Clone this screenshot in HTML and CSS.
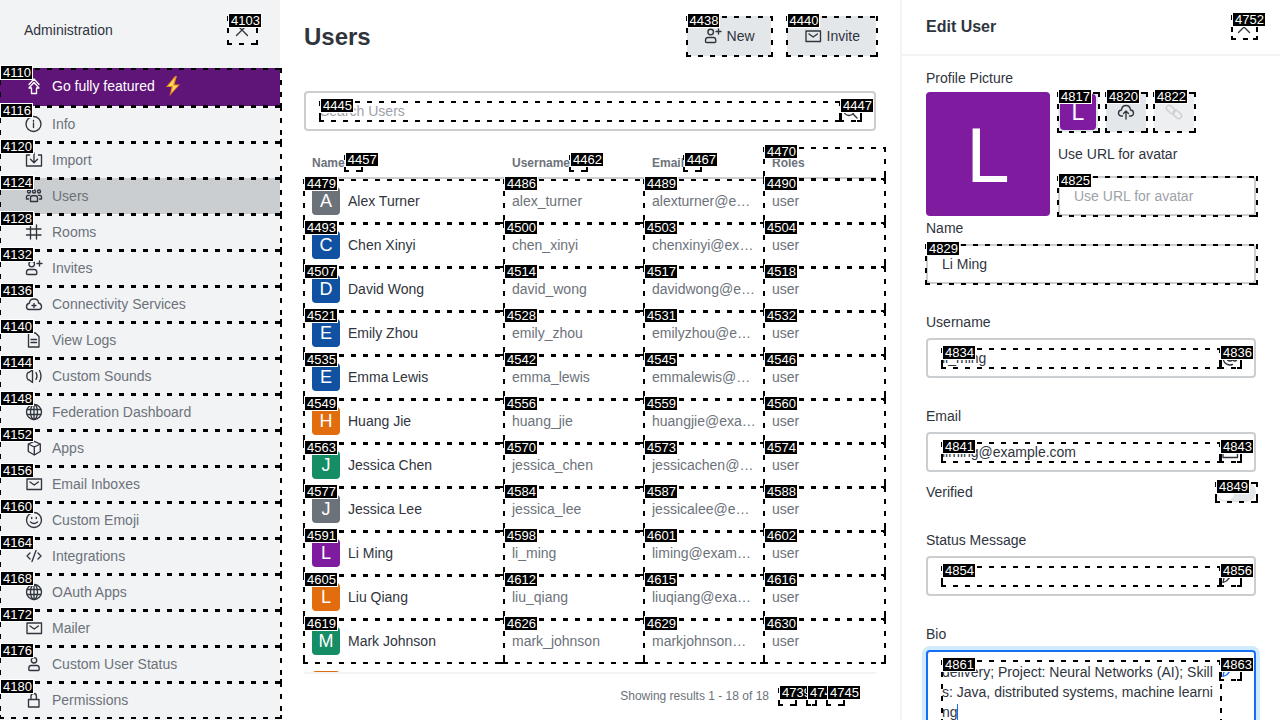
FILE: index.html
```html
<!DOCTYPE html>
<html lang="en">
<head>
<meta charset="utf-8">
<title>Administration - Users</title>
<link rel="stylesheet" href="styles.css">
</head>
<body>
<svg class="sprite" aria-hidden="true">
  <symbol id="close" viewBox="0 0 20 20"><path d="M4.500 4.500l11 11M15.500 4.500l-11 11"/></symbol>
  <symbol id="up" viewBox="0 0 20 20"><path d="M5 8.500L10 3l5 5.500M7.500 17.500h5V12h2.500L10 6.500 5 12h2.500z"/></symbol>
  <symbol id="info" viewBox="0 0 20 20"><circle cx="9.500" cy="10" r="7.500"/><path d="M9.500 9v4.500M9.500 6.300v1"/></symbol>
  <symbol id="import" viewBox="0 0 20 20"><path d="M5.500 5h-3v11h15V5h-3M10 3v9.500M6.500 9.300l3.500 3.400 3.500-3.400"/></symbol>
  <symbol id="team" viewBox="0 0 20 20"><circle cx="5" cy="5.500" r="1.500"/><circle cx="10" cy="5.500" r="1.500"/><circle cx="15" cy="5.500" r="1.500"/><path d="M6.500 15.500v-3.500q0-2.300 2-2.300h3q2 0 2 2.300v3.500zM5.500 9.300H4q-1.500 0-1.500 2v1.700h2M14.500 9.300h1.500q1.500 0 1.500 2v1.700h-2"/></symbol>
  <symbol id="hash" viewBox="0 0 20 20"><path d="M6.500 3v14M12.500 3v14M2.500 7h14.500M2.500 13h14.500"/></symbol>
  <symbol id="useradd" viewBox="0 0 20 20"><circle cx="7.700" cy="6" r="2.800"/><path d="M2.500 14.500q0-3 2.500-3h5.500q2.300 0 2.300 3v1q0 1-1 1H3.500q-1 0-1-1zM15.500 3v5M13 5.500h5"/></symbol>
  <symbol id="cloud" viewBox="0 0 20 20"><path d="M5 15.500q-2.500 0-2.500-2.800T5.500 9q0-4 4.500-4t4.500 4q3 .7 3 3.600t-2.500 2.900zM10 9.500v4M8 11.500h4"/></symbol>
  <symbol id="upload" viewBox="0 0 20 20"><path d="M6.500 14H5q-2.500-.3-2.500-3t3-3q.5-4.500 4.500-4.500T14.500 8q3 .3 3 3T15 14h-1.500M10 17V9M7.500 11.500L10 9l2.500 2.500"/></symbol>
  <symbol id="file" viewBox="0 0 20 20"><path d="M4.500 3h7l3.500 3.500V17H4.500zM7 9.500h5.500M7 12.500h5.500"/></symbol>
  <symbol id="sound" viewBox="0 0 20 20"><path d="M5 6.500l3.500-2.800v12.800L5 13.700H4q-1.200-1-1.200-3.600T4 6.500zM12 6.500q2 3.500 0 7M15.500 4.500q3 5.500 0 11"/></symbol>
  <symbol id="globe" viewBox="0 0 20 20"><circle cx="10" cy="10" r="7.500"/><ellipse cx="10" cy="10" rx="3.500" ry="7.500"/><path d="M10 2.500v15M3.300 7.500h13.400M3.300 12.500h13.400"/></symbol>
  <symbol id="cube" viewBox="0 0 20 20"><path d="M10.300 3.300l6 2.700v7.500l-6 3.500-6-3.500V6zM4.300 6l6 3 6-3M10.300 9v8"/></symbol>
  <symbol id="mail" viewBox="0 0 20 20"><path d="M3 5h14.500v10.500H3zM6 8l4.200 3 4.200-3"/></symbol>
  <symbol id="emoji" viewBox="0 0 20 20"><circle cx="10" cy="10" r="7.500"/><path d="M6.500 12q3.500 3 7 0M7.700 7.300v1.200M12.300 7.300v1.200" /></symbol>
  <symbol id="code" viewBox="0 0 20 20"><path d="M6 7l-3 3 3 3M14 7l3 3-3 3M12 4.500l-4 11"/></symbol>
  <symbol id="user" viewBox="0 0 20 20"><circle cx="10" cy="6.300" r="2.700"/><path d="M4.800 14.500q0-3 2.200-3h6q2.200 0 2.200 3v1q0 1-1 1H5.800q-1 0-1-1z"/></symbol>
  <symbol id="lock" viewBox="0 0 20 20"><path d="M4.500 9.500h10.500V17H4.500zM7 9.500V6.200q0-2.700 2.700-2.700t2.700 2.700v3.300"/></symbol>
  <symbol id="search" viewBox="0 0 20 20"><circle cx="9" cy="9" r="5.500"/><path d="M13 13l4 4"/></symbol>
  <symbol id="at" viewBox="0 0 20 20"><circle cx="10" cy="10" r="3"/><path d="M13 7v4.500q0 1.500 2 1.500t2-3a7 7 0 1 0-4.500 6.500"/></symbol>
  <symbol id="edit" viewBox="0 0 20 20"><path d="M3 16.500l1-5L11.500 4 14 6.500 6.500 15z"/></symbol>
  <symbol id="link" viewBox="0 0 20 20"><rect x="2" y="5" width="9.500" height="5.500" rx="2.700" transform="rotate(42 7 7.500)"/><rect x="8.500" y="9.500" width="9.500" height="5.500" rx="2.700" transform="rotate(42 13 12.500)"/></symbol>
  <symbol id="sort" viewBox="0 0 16 16"><path d="M5 6l3-3 3 3M6 10l2 2 2-2"/></symbol>
</svg>

<div class="app">
<nav class="sidebar">
  <header class="sidebar-head"><span>Administration</span><button class="close-lg" aria-label="Close"><svg class="icon"><use href="#close"/></svg><span class="mark"><b>4103</b></span></button></header>
  <a class="item promo" href="#"><svg class="icon"><use href="#up"/></svg>Go fully featured<svg class="bolt" viewBox="0 0 16 20"><path d="M10 0L1 11h5.500L4.500 20 15 8.500H9.500L12 0z" fill="#e88a1c"/><path d="M10 1.500L3 10h5L6.500 16.500 13 9.500H8z" fill="#ffd95c"/></svg><span class="mark"><b>4110</b></span></a>
  <a class="item" href="#"><svg class="icon"><use href="#info"/></svg>Info<span class="mark"><b>4116</b></span></a>
  <a class="item" href="#"><svg class="icon"><use href="#import"/></svg>Import<span class="mark"><b>4120</b></span></a>
  <a class="item current" href="#"><svg class="icon"><use href="#team"/></svg>Users<span class="mark"><b>4124</b></span></a>
  <a class="item" href="#"><svg class="icon"><use href="#hash"/></svg>Rooms<span class="mark"><b>4128</b></span></a>
  <a class="item" href="#"><svg class="icon"><use href="#useradd"/></svg>Invites<span class="mark"><b>4132</b></span></a>
  <a class="item" href="#"><svg class="icon"><use href="#cloud"/></svg>Connectivity Services<span class="mark"><b>4136</b></span></a>
  <a class="item" href="#"><svg class="icon"><use href="#file"/></svg>View Logs<span class="mark"><b>4140</b></span></a>
  <a class="item" href="#"><svg class="icon"><use href="#sound"/></svg>Custom Sounds<span class="mark"><b>4144</b></span></a>
  <a class="item" href="#"><svg class="icon"><use href="#globe"/></svg>Federation Dashboard<span class="mark"><b>4148</b></span></a>
  <a class="item" href="#"><svg class="icon"><use href="#cube"/></svg>Apps<span class="mark"><b>4152</b></span></a>
  <a class="item" href="#"><svg class="icon"><use href="#mail"/></svg>Email Inboxes<span class="mark"><b>4156</b></span></a>
  <a class="item" href="#"><svg class="icon"><use href="#emoji"/></svg>Custom Emoji<span class="mark"><b>4160</b></span></a>
  <a class="item" href="#"><svg class="icon"><use href="#code"/></svg>Integrations<span class="mark"><b>4164</b></span></a>
  <a class="item" href="#"><svg class="icon"><use href="#globe"/></svg>OAuth Apps<span class="mark"><b>4168</b></span></a>
  <a class="item" href="#"><svg class="icon"><use href="#mail"/></svg>Mailer<span class="mark"><b>4172</b></span></a>
  <a class="item" href="#"><svg class="icon"><use href="#user"/></svg>Custom User Status<span class="mark"><b>4176</b></span></a>
  <a class="item" href="#"><svg class="icon"><use href="#lock"/></svg>Permissions<span class="mark"><b>4180</b></span></a>
</nav>

<main class="main">
  <header class="main-head">
    <h1>Users</h1>
    <button class="btn"><svg class="icon"><use href="#useradd"/></svg>New<span class="mark"><b>4438</b></span></button>
    <button class="btn"><svg class="icon"><use href="#mail"/></svg>Invite<span class="mark"><b>4440</b></span></button>
  </header>
  <div class="box search">
    <span class="slot"><input type="text" placeholder="Search Users" aria-label="Search Users"><span class="mark"><b>4445</b></span></span>
    <span class="addon"><svg class="icon"><use href="#search"/></svg><span class="mark"><b>4447</b></span></span>
  </div>
  <div class="table-wrap">
  <table>
    <colgroup><col><col class="c-user"><col class="c-mail"><col class="c-role"></colgroup>
    <thead><tr>
      <th><div class="th">Name<span class="sort"><svg><use href="#sort"/></svg><span class="mark"><b>4457</b></span></span></div></th>
      <th><div class="th">Username<span class="sort"><svg><use href="#sort"/></svg><span class="mark"><b>4462</b></span></span></div></th>
      <th><div class="th">Email<span class="sort"><svg><use href="#sort"/></svg><span class="mark"><b>4467</b></span></span></div></th>
      <th><div class="th">Roles</div><span class="mark"><b>4470</b></span></th>
    </tr></thead>
    <tbody>
    <tr><td><div class="person"><i class="avatar gray">A</i>Alex Turner</div><span class="mark"><b>4479</b></span></td><td>alex_turner<span class="mark"><b>4486</b></span></td><td><div class="cut">alexturner@example.com</div><span class="mark"><b>4489</b></span></td><td>user<span class="mark"><b>4490</b></span></td></tr>
    <tr><td><div class="person"><i class="avatar blue">C</i>Chen Xinyi</div><span class="mark"><b>4493</b></span></td><td>chen_xinyi<span class="mark"><b>4500</b></span></td><td><div class="cut">chenxinyi@example.com</div><span class="mark"><b>4503</b></span></td><td>user<span class="mark"><b>4504</b></span></td></tr>
    <tr><td><div class="person"><i class="avatar blue">D</i>David Wong</div><span class="mark"><b>4507</b></span></td><td>david_wong<span class="mark"><b>4514</b></span></td><td><div class="cut">davidwong@example.com</div><span class="mark"><b>4517</b></span></td><td>user<span class="mark"><b>4518</b></span></td></tr>
    <tr><td><div class="person"><i class="avatar blue">E</i>Emily Zhou</div><span class="mark"><b>4521</b></span></td><td>emily_zhou<span class="mark"><b>4528</b></span></td><td><div class="cut">emilyzhou@example.com</div><span class="mark"><b>4531</b></span></td><td>user<span class="mark"><b>4532</b></span></td></tr>
    <tr><td><div class="person"><i class="avatar blue">E</i>Emma Lewis</div><span class="mark"><b>4535</b></span></td><td>emma_lewis<span class="mark"><b>4542</b></span></td><td><div class="cut">emmalewis@example.com</div><span class="mark"><b>4545</b></span></td><td>user<span class="mark"><b>4546</b></span></td></tr>
    <tr><td><div class="person"><i class="avatar orange">H</i>Huang Jie</div><span class="mark"><b>4549</b></span></td><td>huang_jie<span class="mark"><b>4556</b></span></td><td><div class="cut">huangjie@example.com</div><span class="mark"><b>4559</b></span></td><td>user<span class="mark"><b>4560</b></span></td></tr>
    <tr><td><div class="person"><i class="avatar green">J</i>Jessica Chen</div><span class="mark"><b>4563</b></span></td><td>jessica_chen<span class="mark"><b>4570</b></span></td><td><div class="cut">jessicachen@example.com</div><span class="mark"><b>4573</b></span></td><td>user<span class="mark"><b>4574</b></span></td></tr>
    <tr><td><div class="person"><i class="avatar gray">J</i>Jessica Lee</div><span class="mark"><b>4577</b></span></td><td>jessica_lee<span class="mark"><b>4584</b></span></td><td><div class="cut">jessicalee@example.com</div><span class="mark"><b>4587</b></span></td><td>user<span class="mark"><b>4588</b></span></td></tr>
    <tr><td><div class="person"><i class="avatar purple">L</i>Li Ming</div><span class="mark"><b>4591</b></span></td><td>li_ming<span class="mark"><b>4598</b></span></td><td><div class="cut">liming@example.com</div><span class="mark"><b>4601</b></span></td><td>user<span class="mark"><b>4602</b></span></td></tr>
    <tr><td><div class="person"><i class="avatar orange">L</i>Liu Qiang</div><span class="mark"><b>4605</b></span></td><td>liu_qiang<span class="mark"><b>4612</b></span></td><td><div class="cut">liuqiang@example.com</div><span class="mark"><b>4615</b></span></td><td>user<span class="mark"><b>4616</b></span></td></tr>
    <tr><td><div class="person"><i class="avatar green">M</i>Mark Johnson</div><span class="mark"><b>4619</b></span></td><td>mark_johnson<span class="mark"><b>4626</b></span></td><td><div class="cut">markjohnson@example.com</div><span class="mark"><b>4629</b></span></td><td>user<span class="mark"><b>4630</b></span></td></tr>
    <tr><td><div class="person"><i class="avatar orange"></i></div></td><td></td><td></td><td></td></tr>
    </tbody>
  </table>
  </div>
  <footer class="pager">
    <span>Showing results 1 - 18 of 18</span>
    <div class="pages">
      <button class="page" aria-label="Previous">‹<span class="mark"><b>4739</b></span></button>
      <button class="page num">1<span class="mark"><b>4742</b></span></button>
      <button class="page" aria-label="Next">›<span class="mark"><b>4745</b></span></button>
    </div>
  </footer>
</main>

<aside class="panel">
  <header class="panel-head"><h2>Edit User</h2><button class="close-sm" aria-label="Close"><svg class="icon"><use href="#close"/></svg><span class="mark"><b>4752</b></span></button></header>
  <form class="form">
    <div class="label">Profile Picture</div>
    <div class="picture">
      <div class="avatar-xl purple">L</div>
      <div class="picture-side">
        <div class="tools">
          <button type="button" class="tool" aria-label="Default avatar"><i class="avatar-sm purple">L</i><span class="mark"><b>4817</b></span></button>
          <button type="button" class="tool" aria-label="Upload"><svg class="icon"><use href="#upload"/></svg><span class="mark"><b>4820</b></span></button>
          <button type="button" class="tool off" aria-label="Add from URL"><svg class="icon"><use href="#link"/></svg><span class="mark"><b>4822</b></span></button>
        </div>
        <label class="label" for="url">Use URL for avatar</label>
        <div class="box"><input id="url" type="text" placeholder="Use URL for avatar"><span class="mark edge"><b>4825</b></span></div>
      </div>
    </div>
    <div class="field"><label class="label" for="name">Name</label>
      <div class="box"><input id="name" type="text" value="Li Ming"><span class="mark edge"><b>4829</b></span></div></div>
    <div class="field"><label class="label" for="username">Username</label>
      <div class="box"><span class="slot"><input id="username" type="text" value="li_ming"><span class="mark"><b>4834</b></span></span><span class="addon"><svg class="icon"><use href="#at"/></svg><span class="mark"><b>4836</b></span></span></div></div>
    <div class="field tight"><label class="label" for="email">Email</label>
      <div class="box"><span class="slot"><input id="email" type="text" value="liming@example.com"><span class="mark"><b>4841</b></span></span><span class="addon"><svg class="icon"><use href="#mail"/></svg><span class="mark"><b>4843</b></span></span></div></div>
    <div class="verified"><label class="label" for="verified">Verified</label><span class="switch"><input id="verified" type="checkbox"><span class="mark"><b>4849</b></span></span></div>
    <div class="field"><label class="label" for="status">Status Message</label>
      <div class="box"><span class="slot"><input id="status" type="text"><span class="mark"><b>4854</b></span></span><span class="addon"><svg class="icon"><use href="#edit"/></svg><span class="mark"><b>4856</b></span></span></div></div>
    <div class="field"><label class="label" for="bio">Bio</label>
      <div class="box focus"><span class="slot"><textarea id="bio" rows="3">delivery; Project: Neural Networks (AI); Skills: Java, distributed systems, machine learning</textarea><i class="caret"></i><span class="mark"><b>4861</b></span></span><span class="addon"><svg class="icon"><use href="#edit"/></svg><span class="mark"><b>4863</b></span></span></div></div>
  </form>
</aside>
</div>
</body>
</html>
```
FILE: styles.css
```css
* { box-sizing: border-box; }
body { margin: 0; overflow: hidden; background: #fff; color: #2f343d; font: 14px/20px "Liberation Sans", Arial, sans-serif; }
button, input, textarea { font: inherit; color: inherit; border: 0; padding: 0; margin: 0; background: none; outline: 0; }
h1, h2 { margin: 0; }
i { font-style: normal; }
.sprite { display: none; }
.icon { width: 20px; height: 20px; flex: none; fill: none; stroke: currentColor; stroke-width: 1.35; stroke-linejoin: round; stroke-linecap: round; }
.app { display: flex; height: 100vh; }

/* Numbered dashed frame around each interactive element */
.mark {
  position: absolute; inset: 0 -2px -1px -1px; z-index: 2; pointer-events: none;
  --h: repeating-linear-gradient(90deg, #000 0 5px, transparent 5px 12px);
  --v: repeating-linear-gradient(180deg, #000 0 5px, transparent 5px 12px);
  --k: linear-gradient(#000, #000);
  background:
    var(--h) 0 0 / 100% 2px no-repeat, var(--h) 0 100% / 100% 2px no-repeat,
    var(--v) 0 0 / 2px 100% no-repeat, var(--v) 100% 0 / 2px 100% no-repeat,
    var(--k) 100% 100% / 5px 2px no-repeat, var(--k) 100% 100% / 2px 4px no-repeat,
    var(--k) 0 100% / 2px 4px no-repeat;
}
td .mark, .item .mark { right: -1px; }
.item .mark, td:last-child .mark { right: -2px; }
.mark b {
  position: absolute; left: 1px; top: -3px; height: 15px; padding: 0 1px 0 2px; border: 1px solid #fff;
  background: #000; color: #fff; font: 400 13px/13px "Liberation Sans", Arial, sans-serif; white-space: nowrap;
}
.mark.edge { inset: -2px -4px -3px -3px; }

.sidebar { flex: 0 0 280px; background: #f2f3f5; }
.sidebar-head { display: flex; justify-content: space-between; align-items: center; padding: 16px 24px; height: 60px; margin-bottom: 8px; }
.close-lg, .close-sm { position: relative; display: flex; align-items: center; justify-content: center; width: 28px; height: 28px; }
.item { position: relative; display: flex; align-items: center; gap: 8px; height: 36px; padding-left: 24px; color: #6c727a; text-decoration: none; }
.item .icon { color: #2f343d; }
.item.promo, .item.promo .icon { color: #fff; }
.item.promo { height: 38px; padding-bottom: 2px; background: #5f1477; }
.item.current { background: #cbced1; }
.bolt { width: 16px; height: 20px; margin-left: 2px; }

.main { flex: 1; min-width: 0; display: flex; flex-direction: column; padding: 0 24px; }
.main-head { display: flex; gap: 16px; padding: 16px 0 35px; }
.main-head h1 { flex: 1; font-size: 24px; line-height: 42px; height: 40px; }
.btn { position: relative; display: flex; align-items: center; gap: 4px; height: 40px; padding: 0 16px; background: #e4e7ea; border-radius: 4px; }
.box { position: relative; display: flex; padding: 8px 14px; border: 2px solid #cbced1; border-radius: 4px; background: #fff; }
.slot { position: relative; display: flex; flex: 1; min-width: 0; }
.box input { flex: 1; width: 100%; min-width: 0; height: 20px; }
.box input::placeholder { color: #9ea2a8; opacity: 1; }
.addon { position: relative; display: flex; width: 20px; height: 20px; }
.search { margin-bottom: 12px; }

.table-wrap { flex: 1; min-height: 0; padding-top: 4px; overflow-x: visible; overflow-y: clip; }
table { width: calc(100% + 8px); table-layout: fixed; border-collapse: collapse; }
.c-user { width: 140px; }
.c-mail, .c-role { width: 120px; }
th, td { position: relative; padding: 0 8px; text-align: left; color: #6c727a; font-weight: 400; }
th { height: 32px; font-size: 12px; font-weight: 700; background: linear-gradient(#cbced1, #cbced1) 0 100% / 100% 2px no-repeat; }
th:last-child { background-size: calc(100% - 8px) 2px; }
.th { display: flex; align-items: center; line-height: 16px; }
.sort { position: relative; display: flex; width: 16px; height: 16px; }
.sort svg { width: 16px; height: 16px; fill: none; stroke: #9ea2a8; }
td { height: 44px; }
.person { display: flex; align-items: center; gap: 8px; color: #2f343d; }
.cut { overflow: hidden; text-overflow: ellipsis; white-space: nowrap; }
.avatar { width: 28px; height: 28px; border-radius: 4px; color: #fff; font-size: 18px; line-height: 28px; text-align: center; }
.gray { background: #6c727a; }
.blue { background: #1151a2; }
.orange { background: #e26d0e; }
.green { background: #158d65; }
.purple { background: #7f1b9f; }
.pager { display: flex; justify-content: flex-end; align-items: center; gap: 10px; height: 48px; padding: 0 33px 2px 0; border-top: 2px solid #f2f3f5; color: #6c727a; font-size: 12px; }
.pages { display: flex; gap: 12px; }
.page { position: relative; width: 16px; height: 17px; line-height: 17px; }
.page.num { width: 8px; }

.panel { flex: 0 0 380px; border-left: 2px solid #f2f3f5; overflow: hidden; }
.panel-head { display: flex; justify-content: space-between; align-items: center; height: 56px; padding: 0 24px; border-bottom: 2px solid #f2f3f5; }
.panel-head h2 { font-size: 16px; }
.close-sm { width: 24px; height: 24px; }
.form { padding: 12px 24px; }
.label { display: block; line-height: 20px; }
.picture { display: flex; gap: 8px; margin: 4px 0 2px; }
.avatar-xl { flex: none; width: 124px; height: 124px; border-radius: 4px; color: #fff; font-size: 78px; line-height: 126px; text-align: center; }
.picture-side { flex: 1; min-width: 0; display: flex; flex-direction: column; justify-content: space-between; }
.tools { display: flex; gap: 8px; }
.tool { position: relative; display: flex; align-items: center; justify-content: center; width: 40px; height: 40px; background: #e4e7ea; border-radius: 4px; }
.tool.off { background: #eeeff1; color: #cbced1; }
.avatar-sm { width: 36px; height: 36px; border-radius: 4px; color: #fff; font-size: 23px; line-height: 37px; }
.field { display: flex; flex-direction: column; gap: 6px; margin-bottom: 28px; }
.field.tight { margin-bottom: 10px; }
.verified { display: flex; justify-content: space-between; margin-bottom: 28px; }
.switch { position: relative; display: flex; width: 40px; height: 20px; }
.switch input { appearance: none; width: 40px; height: 20px; border-radius: 10px; background: radial-gradient(circle at 10px 10px, #fff 8px, #e4e7ea 9px); }
.box.focus { border-color: #156ff5; box-shadow: 0 0 0 4px #d1ebfe; }
.focus .icon { color: #156ff5; }
textarea { display: block; flex: 1; width: 100%; min-width: 0; height: 62px; padding: 2px 4px 0 0; resize: none; overflow: hidden; word-break: break-all; line-height: 20px; }
.caret { position: absolute; left: 15px; top: 44px; width: 1px; height: 16px; background: #156ff5; }
```
